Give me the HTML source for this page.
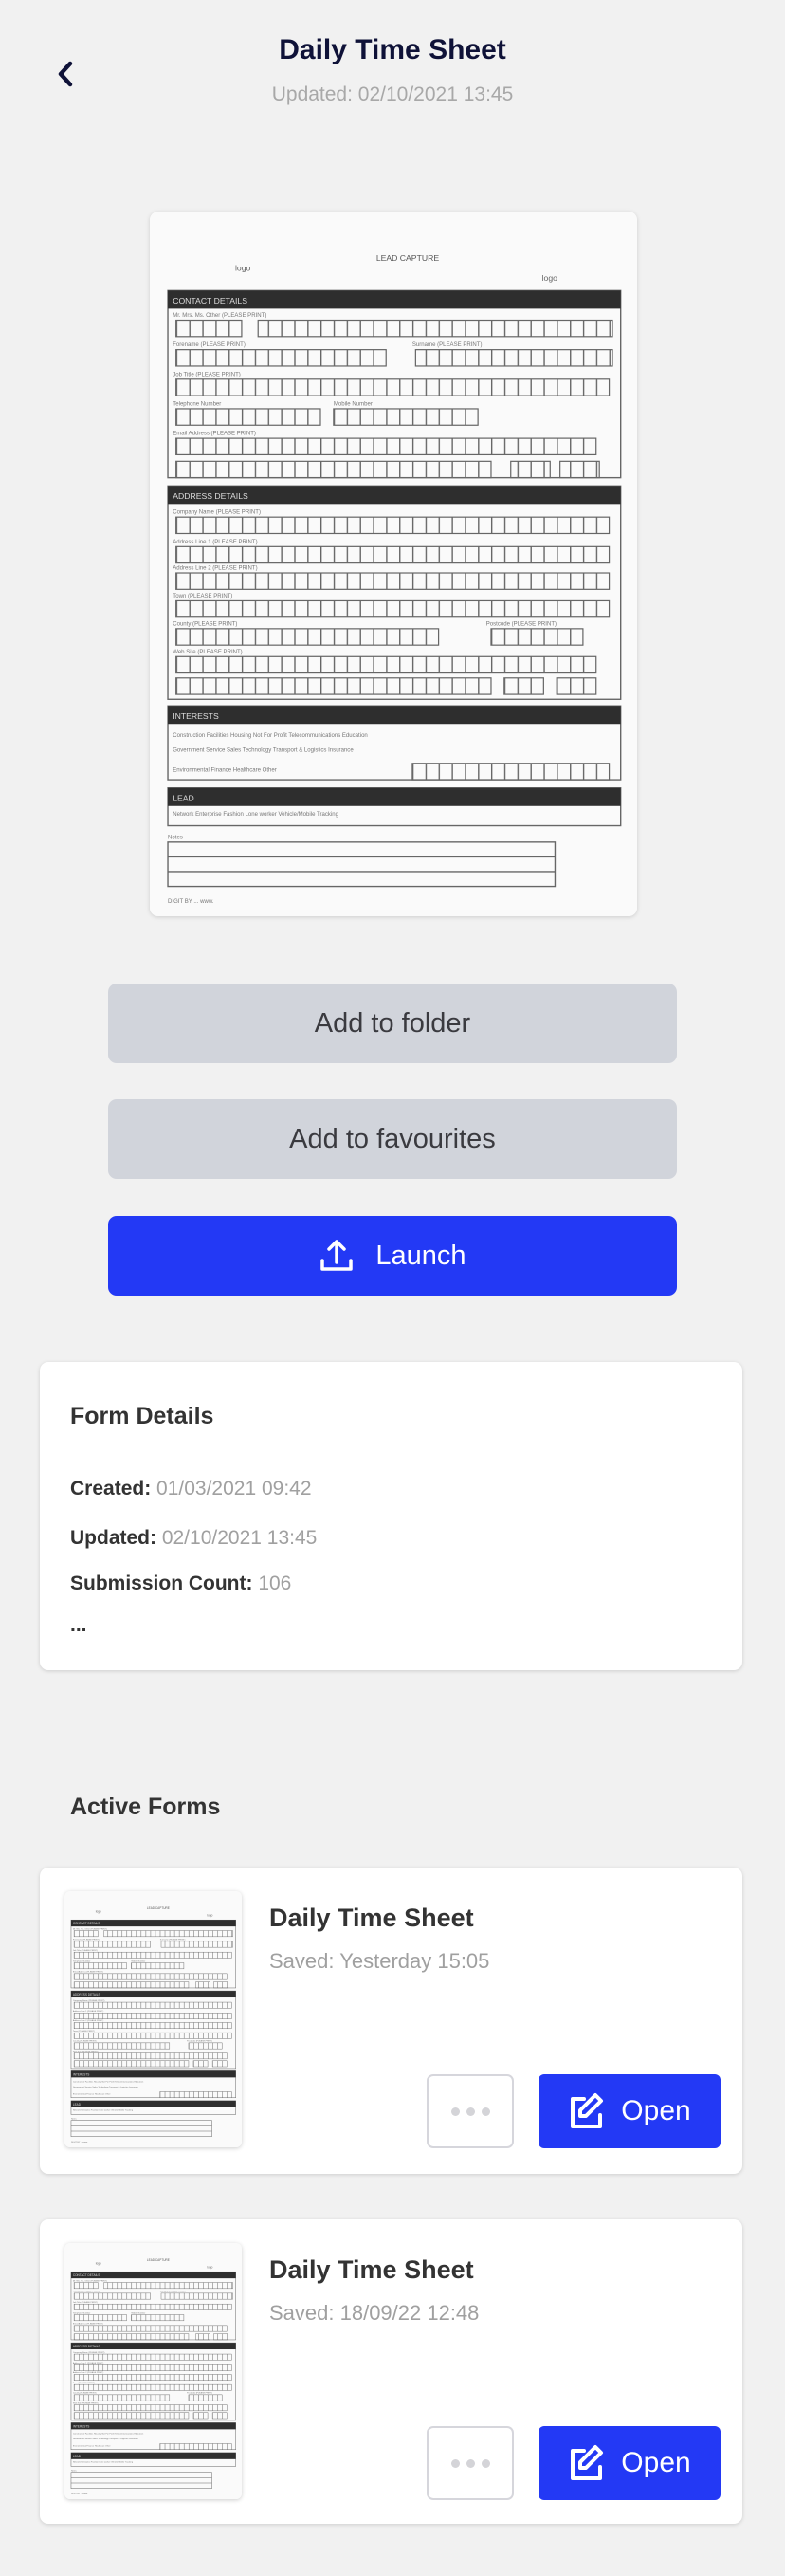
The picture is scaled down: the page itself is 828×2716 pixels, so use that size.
<!DOCTYPE html>
<html><head><meta charset="utf-8"><style>
*{margin:0;padding:0;box-sizing:border-box}
body{width:828px;height:2716px;background:#f1f1f1;font-family:"Liberation Sans",sans-serif;position:relative;overflow:hidden;color:#333}
.a{position:absolute}
.btn{position:absolute;left:114px;width:600px;height:84px;border-radius:9px;background:#d1d4db;color:#3a3a3f;font-size:29px;display:flex;align-items:center;justify-content:center}
.card{position:absolute;left:42px;width:741px;background:#fff;border-radius:9px;box-shadow:0 1px 4px rgba(0,0,0,.15)}
.lbl{position:absolute;left:32px;font-size:21px;font-weight:bold;color:#333}
.lbl span{font-weight:normal;color:#a0a0a0}
.thumb{position:absolute;left:26px;top:25px;width:187px;height:270px;background:#fafafa;border-radius:6px;box-shadow:0 1px 5px rgba(0,0,0,.2);overflow:hidden}
.t1{position:absolute;left:242px;top:38px;font-size:27px;font-weight:bold;color:#333}
.t2{position:absolute;left:242px;top:86px;font-size:22px;color:#a0a0a0}
.dots{position:absolute;left:408px;top:218px;width:92px;height:78px;border:2px solid #d6d6dc;border-radius:7px;display:flex;align-items:center;justify-content:center;gap:7px}
.dots i{width:9px;height:9px;border-radius:50%;background:#d4d4d8}
.open{position:absolute;left:526px;top:218px;width:192px;height:78px;background:#2339f5;border-radius:6px;color:#fff;font-size:30px;display:flex;align-items:center;justify-content:center;gap:18px}
</style></head><body>
<svg width="0" height="0" style="position:absolute">
<defs>
<pattern id="c" width="8" height="4" patternUnits="userSpaceOnUse"><rect x="0" y="0" width=".8" height="4" fill="#666"/></pattern>
<symbol id="form" viewBox="0 0 297 429">
<rect width="297" height="429" fill="#fafafa"/>
<text x="52" y="36" font-size="5" fill="#666">logo</text>
<text x="138" y="30" font-size="5" fill="#555">LEAD CAPTURE</text>
<text x="239" y="42" font-size="5" fill="#666">logo</text>
<g fill="none" stroke="#666" stroke-width=".8">
<rect x="11" y="48" width="276" height="114"/><rect x="11" y="167" width="276" height="130"/><rect x="11" y="301" width="276" height="45"/><rect x="11" y="351" width="276" height="23"/><rect x="11" y="384" width="236" height="27"/>
<line x1="11" y1="393" x2="247" y2="393"/><line x1="11" y1="402" x2="247" y2="402"/>
</g>
<g fill="#2e2e2e"><rect x="11" y="48" width="276" height="11"/><rect x="11" y="167" width="276" height="11"/><rect x="11" y="301" width="276" height="11"/><rect x="11" y="351" width="276" height="11"/></g>
<g font-size="5" fill="#ddd"><text x="14" y="56">CONTACT DETAILS</text><text x="14" y="175">ADDRESS DETAILS</text><text x="14" y="309">INTERESTS</text><text x="14" y="359">LEAD</text></g>
<g fill="url(#c)" stroke="#666" stroke-width=".7">
<rect x="16" y="66" width="40" height="10"/><rect x="66" y="66" width="216" height="10"/>
<rect x="16" y="84" width="128" height="10"/><rect x="162" y="84" width="120" height="10"/>
<rect x="16" y="102" width="264" height="10"/>
<rect x="16" y="120" width="88" height="10"/><rect x="112" y="120" width="88" height="10"/>
<rect x="16" y="138" width="256" height="10"/>
<rect x="16" y="152" width="192" height="10"/><rect x="220" y="152" width="24" height="10"/><rect x="250" y="152" width="24" height="10"/>
<rect x="16" y="186" width="264" height="10"/><rect x="16" y="204" width="264" height="10"/><rect x="16" y="220" width="264" height="10"/><rect x="16" y="237" width="264" height="10"/>
<rect x="16" y="254" width="160" height="10"/><rect x="208" y="254" width="56" height="10"/>
<rect x="16" y="271" width="256" height="10"/><rect x="16" y="284" width="192" height="10"/><rect x="216" y="284" width="24" height="10"/><rect x="248" y="284" width="24" height="10"/>
<rect x="160" y="336" width="120" height="10"/>
</g>
<g font-size="3.5" fill="#777">
<text x="14" y="64">Mr. Mrs. Ms. Other (PLEASE PRINT)</text><text x="14" y="82">Forename (PLEASE PRINT)</text><text x="160" y="82">Surname (PLEASE PRINT)</text><text x="14" y="100">Job Title (PLEASE PRINT)</text><text x="14" y="118">Telephone Number</text><text x="112" y="118">Mobile Number</text><text x="14" y="136">Email Address (PLEASE PRINT)</text>
<text x="14" y="184">Company Name (PLEASE PRINT)</text><text x="14" y="202">Address Line 1 (PLEASE PRINT)</text><text x="14" y="218">Address Line 2 (PLEASE PRINT)</text><text x="14" y="235">Town (PLEASE PRINT)</text><text x="14" y="252">County (PLEASE PRINT)</text><text x="205" y="252">Postcode (PLEASE PRINT)</text><text x="14" y="269">Web Site (PLEASE PRINT)</text>
<text x="14" y="320">Construction  Facilities  Housing  Not For Profit  Telecommunications  Education</text>
<text x="14" y="329">Government  Service  Sales  Technology  Transport &amp; Logistics  Insurance</text>
<text x="14" y="341">Environmental  Finance  Healthcare  Other</text>
<text x="14" y="368">Network  Enterprise  Fashion  Lone worker  Vehicle/Mobile Tracking</text>
<text x="11" y="382">Notes</text><text x="11" y="421">DIGIT BY ... www.</text>
</g>
</symbol>
</defs></svg>

<svg class="a" style="left:58px;top:64px" width="22" height="28" viewBox="0 0 22 28"><path d="M16 3 L6 14 L16 25" fill="none" stroke="#0f1238" stroke-width="4.5" stroke-linecap="round" stroke-linejoin="round"/></svg>
<div class="a" style="left:0;width:828px;top:36px;text-align:center;font-size:30px;font-weight:bold;color:#0f1238">Daily Time Sheet</div>
<div class="a" style="left:0;width:828px;top:88px;text-align:center;font-size:21px;color:#a8a8a8">Updated: 02/10/2021 13:45</div>

<div class="a" style="left:158px;top:223px;width:514px;height:743px;border-radius:9px;background:#fafafa;box-shadow:0 1px 5px rgba(0,0,0,.15);overflow:hidden"><svg width="514" height="743"><use href="#form" width="514" height="743"/></svg></div>

<div class="btn" style="top:1037px">Add to folder</div>
<div class="btn" style="top:1159px">Add to favourites</div>
<div class="btn" style="top:1282px;background:#2339f5;color:#fff;gap:22px">
<svg width="38" height="38" viewBox="0 0 38 38" fill="none" stroke="#fff" stroke-width="3.5" stroke-linecap="round" stroke-linejoin="round"><path d="M19 26V5M11 12l8-8 8 8M4 24v9h30v-9"/></svg>Launch</div>

<div class="card" style="top:1436px;height:325px">
<div class="a" style="left:32px;top:43px;font-size:25px;font-weight:bold;color:#333">Form Details</div>
<div class="lbl" style="top:122px">Created: <span>01/03/2021 09:42</span></div>
<div class="lbl" style="top:174px">Updated: <span>02/10/2021 13:45</span></div>
<div class="lbl" style="top:222px">Submission Count: <span>106</span></div>
<div class="lbl" style="top:266px">...</div>
</div>

<div class="a" style="left:74px;top:1891px;font-size:25px;font-weight:bold;color:#333">Active Forms</div>

<div class="card" style="top:1969px;height:323px">
<div class="thumb"><svg width="187" height="270"><use href="#form" width="187" height="270"/></svg></div>
<div class="t1">Daily Time Sheet</div><div class="t2">Saved: Yesterday 15:05</div>
<div class="dots"><i></i><i></i><i></i></div>
<div class="open"><svg width="38" height="42" viewBox="0 0 38 42" fill="none" stroke="#fff" stroke-width="4" stroke-linecap="round" stroke-linejoin="round"><path d="M17 8H5v29h29V25"/><path d="M29 4l6 6-16 16h-6v-6z"/></svg>Open</div>
</div>

<div class="card" style="top:2340px;height:321px">
<div class="thumb"><svg width="187" height="270"><use href="#form" width="187" height="270"/></svg></div>
<div class="t1">Daily Time Sheet</div><div class="t2">Saved: 18/09/22 12:48</div>
<div class="dots"><i></i><i></i><i></i></div>
<div class="open"><svg width="38" height="42" viewBox="0 0 38 42" fill="none" stroke="#fff" stroke-width="4" stroke-linecap="round" stroke-linejoin="round"><path d="M17 8H5v29h29V25"/><path d="M29 4l6 6-16 16h-6v-6z"/></svg>Open</div>
</div>
</body></html>
